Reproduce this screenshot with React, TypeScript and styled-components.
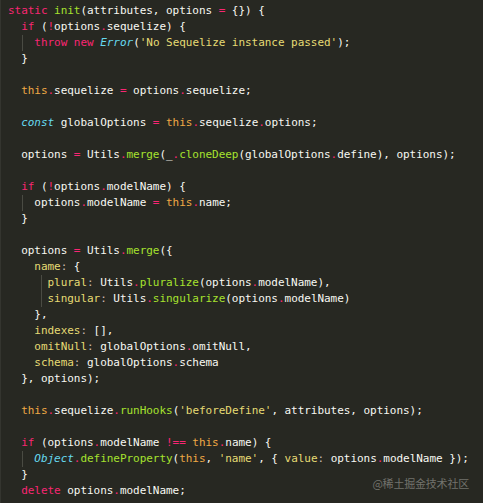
import React from "react";
import styled, { createGlobalStyle } from "styled-components";

const Global = createGlobalStyle`
  html, body { margin: 0; padding: 0; background: #272822; }
  #root { width: 483px; height: 503px; overflow: hidden; }
`;

type Kind = "d" | "k" | "f" | "t" | "s" | "th" | "o" | "p" | "c";
type Tok = [Kind, string];

const colors: Record<Kind, string> = {
  d: "#F8F8F2",
  k: "#F92672",
  f: "#A6E22E",
  t: "#66D9EF",
  s: "#E6DB74",
  th: "#F0A845",
  o: "#F92672",
  p: "#E6DB74",
  c: "#C9B8B0",
};

const Editor = styled.div`
  position: relative;
  box-sizing: border-box;
  width: 483px;
  height: 503px;
  background: #272822;
  padding: 3px 0 0 7px;
  border-left: 1px solid #34352f;
  font-family: "DejaVu Sans Mono", "Liberation Mono", monospace;
  font-size: 11px;
  letter-spacing: -0.04px;
  color: #f8f8f2;
  overflow: hidden;
`;

const Line = styled.div`
  position: relative;
  height: 16px;
  line-height: 16px;
  white-space: pre;
`;

const Guide = styled.span<{ $x: number }>`
  position: absolute;
  top: 0;
  bottom: 0;
  left: ${(p) => p.$x}px;
  width: 1px;
  background: #4a4b43;
`;

const Token = styled.span<{ $kind: Kind }>`
  color: ${(p) => colors[p.$kind]};
  font-style: ${(p) => (p.$kind === "t" ? "italic" : "normal")};
`;

const Watermark = styled.div`
  position: absolute;
  right: 14px;
  bottom: 13px;
  font-family: "Noto Sans CJK SC", "Noto Sans", sans-serif;
  font-size: 11px;
  line-height: 14px;
  color: #72726c;
  letter-spacing: -0.2px;
`;

const d = (s: string): Tok => ["d", s];
const k = (s: string): Tok => ["k", s];
const f = (s: string): Tok => ["f", s];
const t = (s: string): Tok => ["t", s];
const s_ = (s: string): Tok => ["s", s];
const th = (): Tok => ["th", "this"];
const o = (s: string): Tok => ["o", s];
const p = (s: string): Tok => ["p", s];
const c = (): Tok => ["c", ":"];
const dot = (): Tok => ["o", "."];

type LineDef = { toks: Tok[]; guide?: number };

const lines: LineDef[] = [
  { toks: [k("static"), d(" "), f("init"), d("(attributes, options "), o("="), d(" {}) {")] },
  { toks: [d("  "), k("if"), d(" ("), o("!"), d("options"), dot(), d("sequelize) {")] },
  { toks: [d("    "), k("throw"), d(" "), k("new"), d(" "), t("Error"), d("("), s_("'No Sequelize instance passed'"), d(");")], guide: 14 },
  { toks: [d("  }")] },
  { toks: [] },
  { toks: [d("  "), th(), dot(), d("sequelize "), o("="), d(" options"), dot(), d("sequelize;")] },
  { toks: [] },
  { toks: [d("  "), t("const"), d(" globalOptions "), o("="), d(" "), th(), dot(), d("sequelize"), dot(), d("options;")] },
  { toks: [] },
  { toks: [d("  options "), o("="), d(" Utils"), dot(), f("merge"), d("(_"), dot(), f("cloneDeep"), d("(globalOptions"), dot(), d("define), options);")] },
  { toks: [] },
  { toks: [d("  "), k("if"), d(" ("), o("!"), d("options"), dot(), d("modelName) {")] },
  { toks: [d("    options"), dot(), d("modelName "), o("="), d(" "), th(), dot(), d("name;")], guide: 14 },
  { toks: [d("  }")] },
  { toks: [] },
  { toks: [d("  options "), o("="), d(" Utils"), dot(), f("merge"), d("({")] },
  { toks: [d("    "), p("name"), c(), d(" {")] },
  { toks: [d("      "), p("plural"), c(), d(" Utils"), dot(), f("pluralize"), d("(options"), dot(), d("modelName),")], guide: 33 },
  { toks: [d("      "), p("singular"), c(), d(" Utils"), dot(), f("singularize"), d("(options"), dot(), d("modelName)")], guide: 33 },
  { toks: [d("    },")] },
  { toks: [d("    "), p("indexes"), c(), d(" [],")] },
  { toks: [d("    "), p("omitNull"), c(), d(" globalOptions"), dot(), d("omitNull,")] },
  { toks: [d("    "), p("schema"), c(), d(" globalOptions"), dot(), d("schema")] },
  { toks: [d("  }, options);")] },
  { toks: [] },
  { toks: [d("  "), th(), dot(), d("sequelize"), dot(), f("runHooks"), d("("), s_("'beforeDefine'"), d(", attributes, options);")] },
  { toks: [] },
  { toks: [d("  "), k("if"), d(" (options"), dot(), d("modelName "), o("!=="), d(" "), th(), dot(), d("name) {")] },
  { toks: [d("    "), t("Object"), dot(), f("defineProperty"), d("("), th(), d(", "), s_("'name'"), d(", { "), p("value"), c(), d(" options"), dot(), d("modelName });")], guide: 14 },
  { toks: [d("  }")] },
  { toks: [d("  "), k("delete"), d(" options"), dot(), d("modelName;")] },
];

export default function App() {
  return (
    <>
      <Global />
      <Editor>
        {lines.map((ln, i) => (
          <Line key={i}>
            {ln.guide !== undefined && <Guide $x={ln.guide} />}
            {ln.toks.length === 0
              ? " "
              : ln.toks.map(([kind, text], j) => (
                  <Token key={j} $kind={kind}>
                    {text}
                  </Token>
                ))}
          </Line>
        ))}
        <Watermark>@稀土掘金技术社区</Watermark>
      </Editor>
    </>
  );
}
